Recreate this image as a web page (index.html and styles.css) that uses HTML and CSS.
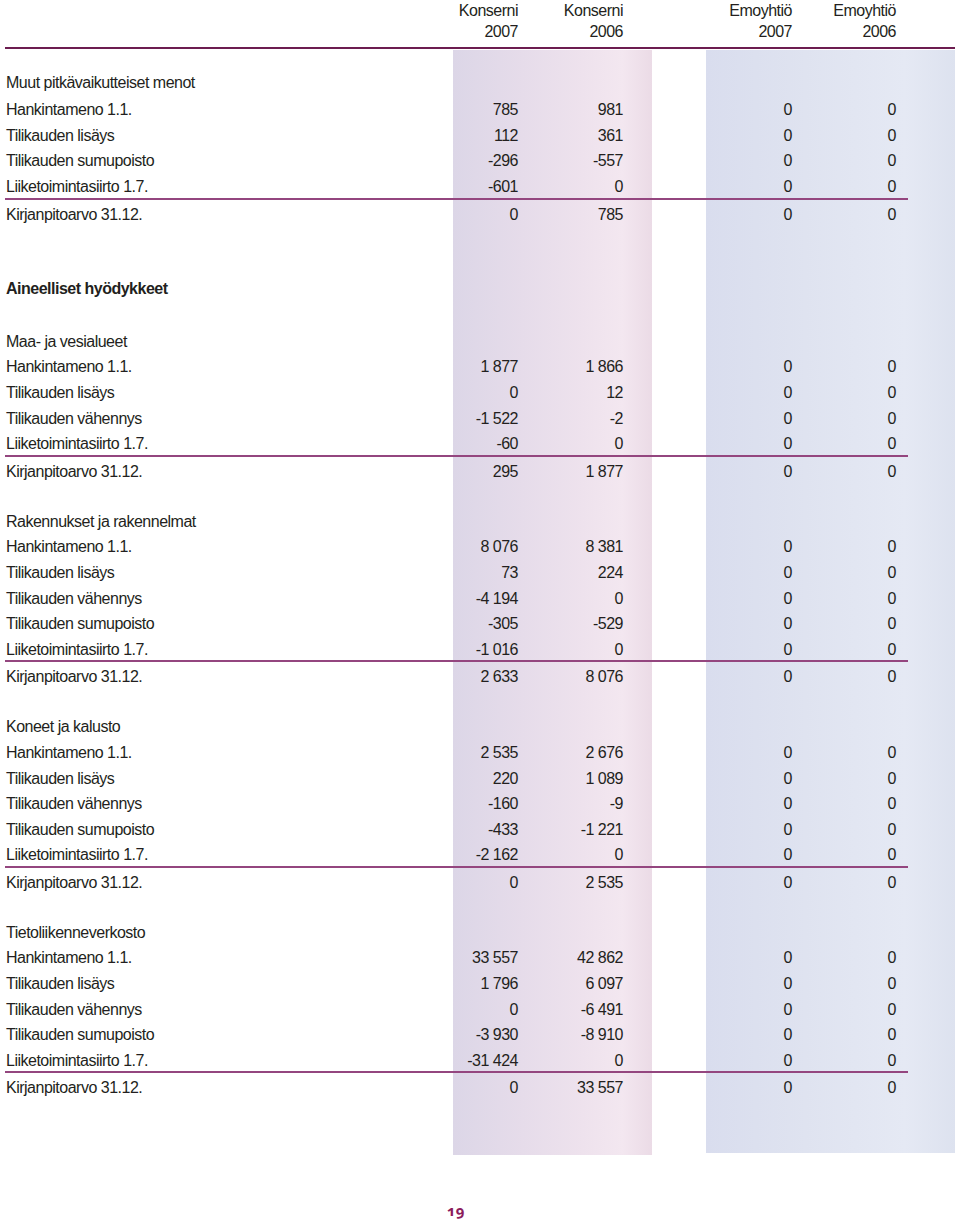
FILE: index.html
```html
<!DOCTYPE html>
<html lang="fi">
<head>
<meta charset="utf-8">
<title>Aineettomat ja aineelliset hyödykkeet</title>
<link rel="stylesheet" href="styles.css">
</head>
<body>
<div class="page">
  <div class="head">
    <span></span>
    <span class="hcell">Konserni<br>2007</span>
    <span class="hcell">Konserni<br>2006</span>
    <span class="hcell">Emoyhtiö<br>2007</span>
    <span class="hcell">Emoyhtiö<br>2006</span>
  </div>

  <div class="sheet">
    <div class="block first">
      <div class="block-title lead">Muut pitkävaikutteiset menot</div>
      <div class="row"><span class="label">Hankintameno 1.1.</span><span>785</span><span>981</span><span>0</span><span>0</span></div>
      <div class="row"><span class="label">Tilikauden lisäys</span><span>112</span><span>361</span><span>0</span><span>0</span></div>
      <div class="row"><span class="label">Tilikauden sumupoisto</span><span>-296</span><span>-557</span><span>0</span><span>0</span></div>
      <div class="row pre"><span class="label">Liiketoimintasiirto 1.7.</span><span>-601</span><span>0</span><span>0</span><span>0</span></div>
      <div class="row total"><span class="label">Kirjanpitoarvo 31.12.</span><span>0</span><span>785</span><span>0</span><span>0</span></div>
    </div>

    <div class="group-title">Aineelliset hyödykkeet</div>

    <div class="block">
      <div class="block-title">Maa- ja vesialueet</div>
      <div class="row"><span class="label">Hankintameno 1.1.</span><span>1 877</span><span>1 866</span><span>0</span><span>0</span></div>
      <div class="row"><span class="label">Tilikauden lisäys</span><span>0</span><span>12</span><span>0</span><span>0</span></div>
      <div class="row"><span class="label">Tilikauden vähennys</span><span>-1 522</span><span>-2</span><span>0</span><span>0</span></div>
      <div class="row pre"><span class="label">Liiketoimintasiirto 1.7.</span><span>-60</span><span>0</span><span>0</span><span>0</span></div>
      <div class="row total"><span class="label">Kirjanpitoarvo 31.12.</span><span>295</span><span>1 877</span><span>0</span><span>0</span></div>
    </div>

    <div class="block">
      <div class="block-title">Rakennukset ja rakennelmat</div>
      <div class="row"><span class="label">Hankintameno 1.1.</span><span>8 076</span><span>8 381</span><span>0</span><span>0</span></div>
      <div class="row"><span class="label">Tilikauden lisäys</span><span>73</span><span>224</span><span>0</span><span>0</span></div>
      <div class="row"><span class="label">Tilikauden vähennys</span><span>-4 194</span><span>0</span><span>0</span><span>0</span></div>
      <div class="row"><span class="label">Tilikauden sumupoisto</span><span>-305</span><span>-529</span><span>0</span><span>0</span></div>
      <div class="row pre"><span class="label">Liiketoimintasiirto 1.7.</span><span>-1 016</span><span>0</span><span>0</span><span>0</span></div>
      <div class="row total"><span class="label">Kirjanpitoarvo 31.12.</span><span>2 633</span><span>8 076</span><span>0</span><span>0</span></div>
    </div>

    <div class="block">
      <div class="block-title">Koneet ja kalusto</div>
      <div class="row"><span class="label">Hankintameno 1.1.</span><span>2 535</span><span>2 676</span><span>0</span><span>0</span></div>
      <div class="row"><span class="label">Tilikauden lisäys</span><span>220</span><span>1 089</span><span>0</span><span>0</span></div>
      <div class="row"><span class="label">Tilikauden vähennys</span><span>-160</span><span>-9</span><span>0</span><span>0</span></div>
      <div class="row"><span class="label">Tilikauden sumupoisto</span><span>-433</span><span>-1 221</span><span>0</span><span>0</span></div>
      <div class="row pre"><span class="label">Liiketoimintasiirto 1.7.</span><span>-2 162</span><span>0</span><span>0</span><span>0</span></div>
      <div class="row total"><span class="label">Kirjanpitoarvo 31.12.</span><span>0</span><span>2 535</span><span>0</span><span>0</span></div>
    </div>

    <div class="block">
      <div class="block-title">Tietoliikenneverkosto</div>
      <div class="row"><span class="label">Hankintameno 1.1.</span><span>33 557</span><span>42 862</span><span>0</span><span>0</span></div>
      <div class="row"><span class="label">Tilikauden lisäys</span><span>1 796</span><span>6 097</span><span>0</span><span>0</span></div>
      <div class="row"><span class="label">Tilikauden vähennys</span><span>0</span><span>-6 491</span><span>0</span><span>0</span></div>
      <div class="row"><span class="label">Tilikauden sumupoisto</span><span>-3 930</span><span>-8 910</span><span>0</span><span>0</span></div>
      <div class="row pre"><span class="label">Liiketoimintasiirto 1.7.</span><span>-31 424</span><span>0</span><span>0</span><span>0</span></div>
      <div class="row total"><span class="label">Kirjanpitoarvo 31.12.</span><span>0</span><span>33 557</span><span>0</span><span>0</span></div>
    </div>
  </div>

  <div class="pageno">19</div>
</div>
</body>
</html>
```

FILE: styles.css
```css
html, body {
  margin: 0;
  padding: 0;
  background: #ffffff;
}

body {
  font-family: "Liberation Sans", Arial, sans-serif;
  font-size: 16px;
  color: #231f20;
  letter-spacing: -0.5px;
}

.page {
  width: 960px;
}

.head {
  display: grid;
  grid-template-columns: 413px 100px 105px 169px 104px;
  width: 950px;
  margin-left: 5px;
  line-height: 21.3px;
  padding-bottom: 4.4px;
  border-bottom: 2px solid #6c1d50;
}

.hcell {
  text-align: right;
  white-space: nowrap;
}

.sheet {
  display: flex;
  flex-direction: column;
  margin-top: 1px;
  padding: 20.2px 0 53.7px 5px;
  background-image:
    linear-gradient(to right, #dcd6e7 0%, #e6dcea 35%, #eee2ed 65%, #f3e7f0 85%, #ebdbe6 100%),
    linear-gradient(to right, #d9ddee 0%, #dfe3f0 40%, #e5e9f4 80%, #dde2ef 100%);
  background-repeat: no-repeat, no-repeat;
  background-position: 453px 0, 706px 0;
  background-size: 199px 100%, 249px calc(100% - 2px);
}

.block {
  display: flex;
  flex-direction: column;
  margin-top: 24.4px;
}

.block.first {
  margin-top: 0;
}

.block-title {
  line-height: 25.6px;
  padding-left: 1px;
}

.block-title.lead {
  margin-bottom: 1.5px;
}

.group-title {
  line-height: 25.6px;
  padding-left: 1px;
  font-weight: 700;
  margin-top: 49px;
  margin-bottom: 2.6px;
}

.row {
  display: grid;
  grid-template-columns: 413px 100px 105px 169px 104px;
  width: 903px;
  line-height: 25.6px;
}

.row > span {
  text-align: right;
  white-space: nowrap;
}

.row > .label {
  text-align: left;
  padding-left: 1px;
}

.row.pre {
  line-height: 21.6px;
  padding-top: 2px;
  border-bottom: 2px solid #94467f;
}

.row.total {
  padding-top: 2px;
}

.pageno {
  margin-top: 45px;
  padding-left: 447px;
  font-family: "Open Sans", "Liberation Sans", sans-serif;
  font-weight: 700;
  font-size: 15px;
  line-height: 20px;
  letter-spacing: 0;
  color: #8c1c5c;
  font-variant-numeric: oldstyle-nums;
}
```
